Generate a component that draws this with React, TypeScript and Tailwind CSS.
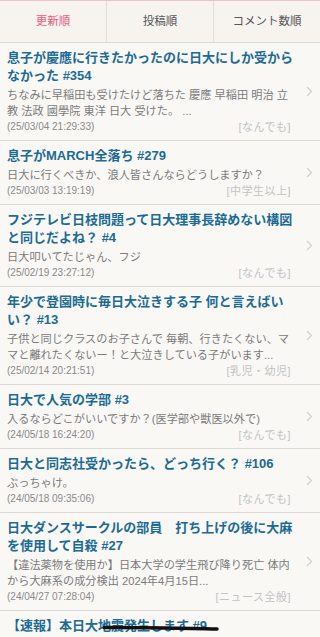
import React from "react"

interface Topic {
  title: string
  num: string
  body: string
  date: string
  category: string
}

const topics: Topic[] = [
  {
    title: "息子が慶應に行きたかったのに日大にしか受からなかった",
    num: "#354",
    body: "ちなみに早稲田も受けたけど落ちた 慶應 早稲田 明治 立教 法政 國學院 東洋 日大 受けた。 ...",
    date: "(25/03/04 21:29:33)",
    category: "[なんでも]",
  },
  {
    title: "息子がMARCH全落ち",
    num: "#279",
    body: "日大に行くべきか、浪人皆さんならどうしますか？",
    date: "(25/03/03 13:19:19)",
    category: "[中学生以上]",
  },
  {
    title: "フジテレビ日枝問題って日大理事長辞めない構図と同じだよね？",
    num: "#4",
    body: "日大叩いてたじゃん、フジ",
    date: "(25/02/19 23:27:12)",
    category: "[なんでも]",
  },
  {
    title: "年少で登園時に毎日大泣きする子 何と言えばいい？",
    num: "#13",
    body: "子供と同じクラスのお子さんで 毎朝、行きたくない、ママと離れたくないー！と大泣きしている子がいます...",
    date: "(25/02/14 20:21:51)",
    category: "[乳児・幼児]",
  },
  {
    title: "日大で人気の学部",
    num: "#3",
    body: "入るならどこがいいですか？(医学部や獣医以外で)",
    date: "(24/05/18 16:24:20)",
    category: "[なんでも]",
  },
  {
    title: "日大と同志社受かったら、どっち行く？",
    num: "#106",
    body: "ぶっちゃけ。",
    date: "(24/05/18 09:35:06)",
    category: "[なんでも]",
  },
  {
    title: "日大ダンスサークルの部員　打ち上げの後に大麻を使用して自殺",
    num: "#27",
    body: "【違法薬物を使用か】日本大学の学生飛び降り死亡 体内から大麻系の成分検出 2024年4月15日...",
    date: "(24/04/27 07:28:04)",
    category: "[ニュース全般]",
  },
]

const font = "font-['Liberation_Sans','Noto_Sans_CJK_JP',sans-serif]"

function Chevron() {
  return (
    <svg width="7" height="11" viewBox="0 0 7 11" className="shrink-0">
      <polyline points="1,1 5.5,5.5 1,10" fill="none" stroke="#cfcfcf" strokeWidth="1.1" />
    </svg>
  )
}

function TopicRow({ t }: { t: Topic }) {
  return (
    <div className="flex items-center border-b border-[#dcd9d5] bg-[#f9f8f5] shadow-[0_1px_0_#efece8]">
      <div className="w-[300px] shrink-0 pl-[7px] pr-[3px] pt-[6px] pb-[5px]">
        <div className="text-[13px] leading-[18px] font-bold text-[#1b6b95]">
          {t.title} {t.num}
        </div>
        <div className="mt-[2px] text-[11.2px] leading-[16px] text-[#7b7b7b]">{t.body}</div>
        <div className="flex items-center justify-between pr-[6px] leading-[16px]">
          <span className="text-[10px] text-[#8a8a8a]">{t.date}</span>
          <span className="text-[11px] tracking-[0.5px] text-[#c3c3c3]">{t.category}</span>
        </div>
      </div>
      <div className="flex flex-1 justify-center pr-[2px]">
        <Chevron />
      </div>
    </div>
  )
}

export default function App() {
  const tabs = ["更新順", "投稿順", "コメント数順"]
  return (
    <div className={`w-[320px] h-[637px] overflow-hidden bg-[#f9f8f5] ${font}`}>
      <div className="flex h-[43px] border-t border-[#e6c6cb] border-b border-b-[#dcd8d3] bg-[#f7f4f0]">
        {tabs.map((tab, i) => (
          <div
            key={tab}
            className={`flex flex-1 items-center justify-center text-[11.5px] ${
              i === 0 ? "text-[#ec5a80]" : "text-[#555]"
            } ${i < 2 ? "border-r border-[#e0dcd7]" : ""}`}
          >
            {tab}
          </div>
        ))}
      </div>
      {topics.map((t) => (
        <TopicRow key={t.num} t={t} />
      ))}
      <div className="relative bg-[#f9f8f5] pl-[7px] pt-[6px]">
        <div className="text-[13px] leading-[18px] font-bold text-[#1b6b95]">【速報】本日大地震発生します #9</div>
        <svg className="absolute left-[102px] top-[13px]" width="118" height="8" viewBox="0 0 118 8">
          <path d="M2 3.5 C 30 3, 70 4, 115 5" fill="none" stroke="#111" strokeWidth="3.5" strokeLinecap="round" />
        </svg>
      </div>
    </div>
  )
}
